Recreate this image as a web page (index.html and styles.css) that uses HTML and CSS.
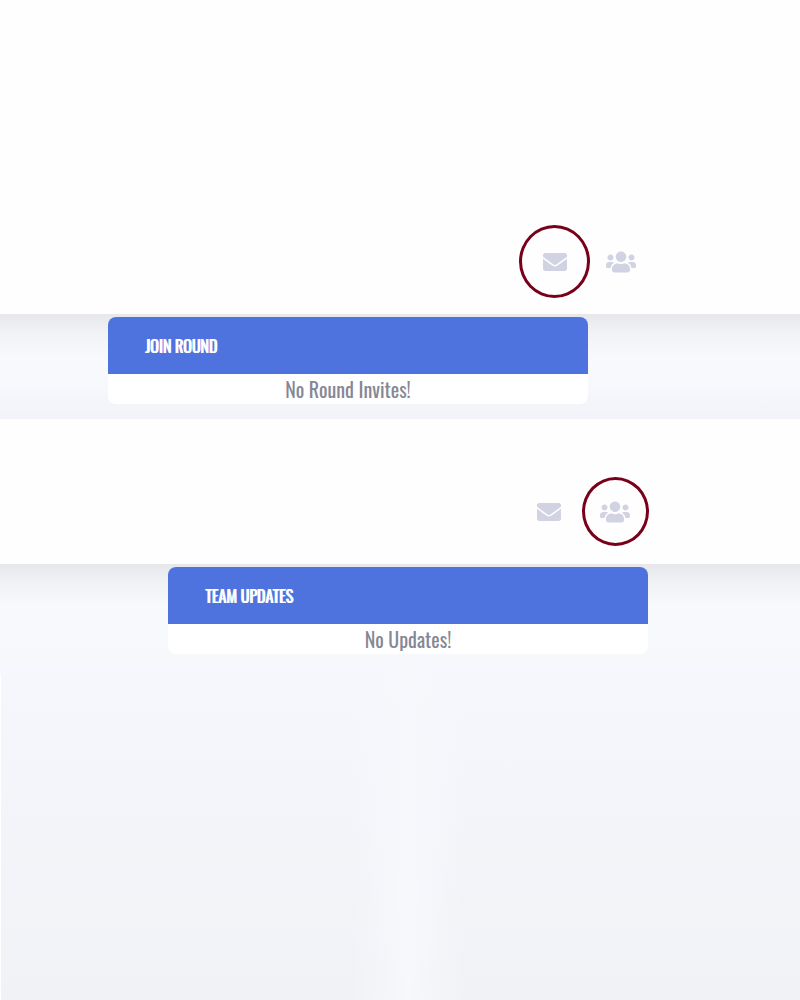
FILE: index.html
```html
<!DOCTYPE html>
<html lang="en">
<head>
<meta charset="utf-8">
<meta name="viewport" content="width=device-width, initial-scale=1">
<title>Notifications</title>
<link rel="stylesheet" href="styles.css">
</head>
<body>
<svg class="sprite" aria-hidden="true">
  <symbol id="envelope" viewBox="0 0 512 512"><path d="M502.3 190.800c3.900-3.100 9.700-.2 9.700 4.700V400c0 26.500-21.500 48-48 48H48c-26.500 0-48-21.500-48-48V195.600c0-5 5.700-7.800 9.700-4.700 22.400 17.400 52.100 39.500 154.100 113.600 21.100 15.400 56.700 47.800 92.200 47.600 35.700.3 72-32.800 92.300-47.600 102-74.100 131.600-96.300 154-113.700zM256 320c23.200.4 56.600-29.200 73.400-41.400 132.700-96.300 142.800-104.700 173.400-128.700 5.800-4.500 9.200-11.500 9.200-18.900v-19c0-26.500-21.500-48-48-48H48c-26.500 0-48 21.500-48 48v19c0 7.400 3.400 14.300 9.200 18.900 30.600 23.900 40.700 32.400 173.400 128.700 16.800 12.200 50.200 41.800 73.400 41.400z"/></symbol>
  <symbol id="users" viewBox="0 0 640 512"><path d="M96 224c35.300 0 64-28.700 64-64s-28.700-64-64-64-64 28.700-64 64 28.700 64 64 64zm448 0c35.300 0 64-28.700 64-64s-28.700-64-64-64-64 28.700-64 64 28.700 64 64 64zm32 32h-64c-17.600 0-33.500 7.100-45.100 18.600 40.300 22.100 68.900 62 75.100 109.400h66c17.700 0 32-14.300 32-32v-32c0-35.300-28.700-64-64-64zm-256 0c61.900 0 112-50.100 112-112S381.900 32 320 32 208 82.100 208 144s50.100 112 112 112zm76.800 32h-8.300c-20.800 10-43.900 16-68.500 16s-47.600-6-68.500-16h-8.300C179.600 288 128 339.600 128 403.200V432c0 26.500 21.500 48 48 48h288c26.500 0 48-21.500 48-48v-28.800c0-63.600-51.600-115.200-115.200-115.200zm-223.700-13.400C161.500 263.100 145.600 256 128 256H64c-35.300 0-64 28.700-64 64v32c0 17.700 14.300 32 32 32h65.900c6.300-47.400 34.900-87.300 75.200-109.400z"/></symbol>
</svg>
<main class="page">
  <header class="topbar topbar-rounds">
    <nav class="actions" aria-label="Round notifications">
      <button class="action marked" type="button" aria-label="Round invites"><svg class="icon"><use href="#envelope"/></svg></button>
      <button class="action" type="button" aria-label="Team updates"><svg class="icon icon-wide"><use href="#users"/></svg></button>
    </nav>
  </header>
  <section class="content content-rounds">
    <article class="panel">
      <h2 class="panel-title">JOIN ROUND</h2>
      <p class="panel-text">No Round Invites!</p>
    </article>
  </section>
  <header class="topbar topbar-teams">
    <nav class="actions" aria-label="Team notifications">
      <button class="action" type="button" aria-label="Round invites"><svg class="icon"><use href="#envelope"/></svg></button>
      <button class="action marked marked-small" type="button" aria-label="Team updates"><svg class="icon icon-wide"><use href="#users"/></svg></button>
    </nav>
  </header>
  <section class="content content-teams">
    <article class="panel">
      <h2 class="panel-title">TEAM UPDATES</h2>
      <p class="panel-text">No Updates!</p>
    </article>
  </section>
</main>
</body>
</html>
```
FILE: styles.css
```css
* { box-sizing: border-box; }
body {
  margin: 0;
  background: #fff;
  font-family: Oswald, "Liberation Sans Narrow", "Liberation Sans", sans-serif;
}
.sprite { display: none; }
.page {
  display: flex;
  flex-direction: column;
  min-height: 100vh;
}
.topbar {
  display: flex;
  justify-content: flex-end;
  align-items: flex-end;
  background: #fefefe;
}
.topbar-rounds { padding: 250px 164px 40px 16px; }
.topbar-teams { padding: 81px 170px 40px 16px; }
.actions { display: flex; gap: 39px; }
.action {
  position: relative;
  display: flex;
  padding: 0;
  border: 0;
  background: none;
  color: #d1d3e2;
  cursor: pointer;
}
.icon {
  display: block;
  width: 24px;
  height: 24px;
  fill: currentColor;
}
.icon-wide { width: 30px; }
.marked::after {
  content: "";
  position: absolute;
  inset: -25px -23px -24px -24px;
  border: 3px solid #78001a;
  border-radius: 50%;
}
.marked-small::after { inset: -23px -19px -22px -18px; }
.content {
  display: flex;
  justify-content: flex-end;
  align-items: flex-start;
}
.content-rounds {
  padding: 3px 212px 15px 16px;
  background: linear-gradient(#e6e7eb, #f0f2f6 18px, #f7f9fd 42px, #f8f9fd 65px, #f2f3f8);
}
.content-teams {
  position: relative;
  flex: 1;
  padding: 3px 152px 16px 16px;
  background: linear-gradient(#e6e7eb, #f0f2f6 18px, #f7f9fd 42px, #f8f9fd 70px, #f5f6fb 150px, #f1f2f6);
}
.content-teams::before {
  content: "";
  position: absolute;
  inset: 90px 42% 0 44%;
  background: linear-gradient(90deg, transparent, #f7f8fc 50%, transparent);
}
.content-teams::after {
  content: "";
  position: absolute;
  inset: 110px auto 0 0;
  width: 1px;
  background: #fff;
}
.panel {
  position: relative;
  z-index: 1;
  width: 480px;
  max-width: 100%;
  overflow: hidden;
  border-radius: 8px;
  background: #fff;
}
.panel-title {
  margin: 0;
  padding: 17px 37px 16px;
  background: #4e73df;
  color: #fff;
  font-size: 16px;
  font-weight: 400;
  line-height: 24px;
  text-shadow: 1px 0 #fff;
}
.panel-text {
  margin: 0;
  color: #858796;
  font-size: 20px;
  line-height: 30px;
  text-align: center;
}
```
